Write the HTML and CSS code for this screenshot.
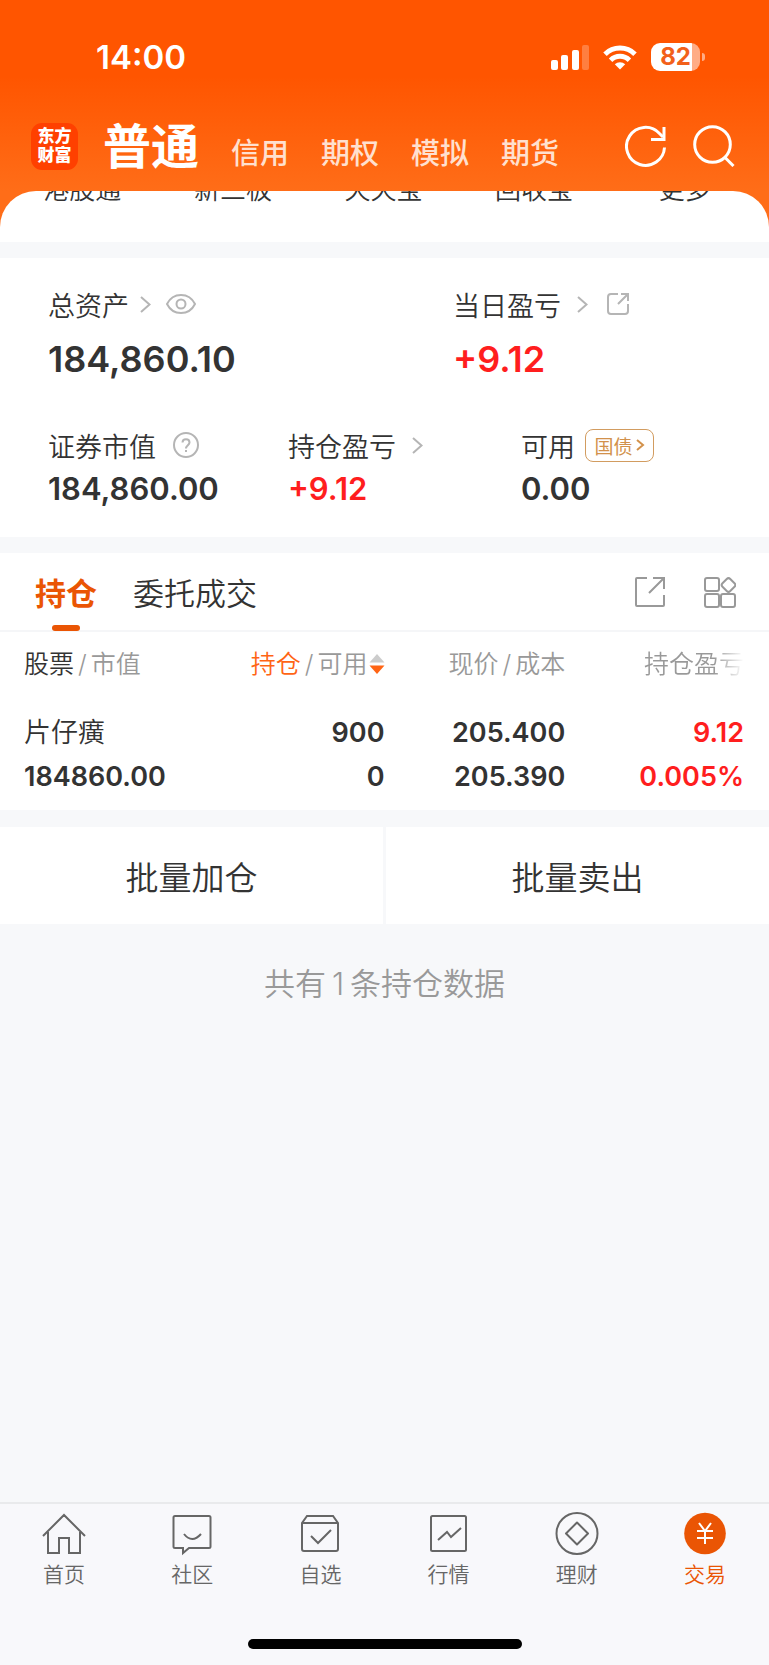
FILE: index.html
```html
<!DOCTYPE html>
<html lang="zh-CN">
<head>
  <meta charset="UTF-8">
  <meta name="viewport" content="width=device-width, initial-scale=1">
  <title>普通交易 - 持仓</title>
  <link rel="stylesheet" href="styles.css">
</head>
<body>

  <header class="top">
    <div class="status">
      <span class="time">14:00</span>
      <div class="signals">
        <svg width="38" height="25" viewBox="0 0 38 25" fill="#fff">
          <rect x="0" y="15" width="7" height="10" rx="2"/>
          <rect x="10" y="10" width="7" height="15" rx="2"/>
          <rect x="21" y="5" width="7" height="20" rx="2"/>
          <rect x="31" y="0" width="7" height="25" rx="2" opacity=".25"/>
        </svg>
        <svg width="34" height="25" viewBox="0 0 34 25" fill="none" stroke="#fff" stroke-width="5">
          <path d="M2 9.2a21.5 21.5 0 0 1 30 0"/>
          <path d="M7.6 15.2a13.4 13.4 0 0 1 18.800 0"/>
          <path d="M17 24.500l-5.200-5.200a7.400 7.400 0 0 1 10.400 0z" fill="#fff" stroke="none"/>
        </svg>
        <div class="battery">
          <span class="battery-level">82</span>
          <span class="battery-tip"></span>
        </div>
      </div>
    </div>
    <div class="bar">
      <div class="logo"><span>东方</span><span>财富</span></div>
      <nav class="accounts">
        <a href="#" class="current">普通</a>
        <a href="#">信用</a>
        <a href="#">期权</a>
        <a href="#">模拟</a>
        <a href="#">期货</a>
      </nav>
      <div class="bar-tools">
        <button type="button" aria-label="刷新">
          <svg width="42" height="42" viewBox="0 0 42 42" fill="none" stroke="#fff" stroke-width="3">
            <path d="M39.500 22.500A19 19 0 1 1 34.500 8.500L38 12"/>
            <path d="M39 2v12.500H26"/>
          </svg>
        </button>
        <button type="button" aria-label="搜索">
          <svg width="42" height="42" viewBox="0 0 42 42" fill="none" stroke="#fff" stroke-width="3">
            <circle cx="19.500" cy="19.500" r="17.800"/>
            <path d="M31.500 32l9 9"/>
          </svg>
        </button>
      </div>
    </div>
  </header>

  <div class="sheet-wrap">
    <div class="sheet">
      <a href="#">港股通</a>
      <a href="#">新三板</a>
      <a href="#">天天宝</a>
      <a href="#">回收宝</a>
      <a href="#">更多</a>
    </div>
  </div>

  <section class="summary">
    <div class="totals">
      <div class="item">
        <div class="label">总资产
          <svg class="arrow" width="11" height="17" viewBox="0 0 11 17"><path d="M1 1l8.500 7.500L1 16"/></svg>
          <svg class="eye" width="30" height="20" viewBox="0 0 30 20"><path d="M1 10C7-2 23-2 29 10C23 22 7 22 1 10z"/><circle cx="15" cy="10" r="4.500"/></svg>
        </div>
        <div class="value">184,860.10</div>
      </div>
      <div class="item">
        <div class="label">当日盈亏
          <svg class="arrow wide" width="11" height="17" viewBox="0 0 11 17"><path d="M1 1l8.500 7.500L1 16"/></svg>
          <svg class="share" width="24" height="24" viewBox="0 0 24 24"><path d="M12 2H5Q2 2 2 5v14q0 3 3 3h14q3 0 3-3v-7M12 12L22 2M15 2h7v7"/></svg>
        </div>
        <div class="value up">+9.12</div>
      </div>
    </div>
    <div class="details">
      <div class="item">
        <div class="label">证券市值
          <svg class="help" width="26" height="26" viewBox="0 0 26 26"><circle cx="13" cy="13" r="12"/><path d="M9.500 10.500c0-4.500 7-4.500 7 0c0 2.500-3.500 3-3.500 6M13 18v2"/></svg>
        </div>
        <div class="value">184,860.00</div>
      </div>
      <div class="item">
        <div class="label">持仓盈亏
          <svg class="arrow wide" width="11" height="17" viewBox="0 0 11 17"><path d="M1 1l8.500 7.500L1 16"/></svg>
        </div>
        <div class="value up">+9.12</div>
      </div>
      <div class="item">
        <div class="label">可用
          <button type="button" class="bond">国债<svg width="9" height="14" viewBox="0 0 9 14"><path d="M1 2l6 5-6 5"/></svg></button>
        </div>
        <div class="value">0.00</div>
      </div>
    </div>
  </section>

  <section class="positions">
    <div class="tabs">
      <button type="button" class="tab active">持仓</button>
      <button type="button" class="tab">委托成交</button>
      <div class="tab-tools">
        <button type="button" aria-label="分享">
          <svg width="32" height="32" viewBox="0 0 32 32"><path d="M13 2H3Q2 2 2 3v26q0 1 1 1h26q1 0 1-1V19M15 17L30 2M19 2h11v11"/></svg>
        </button>
        <button type="button" aria-label="更多功能">
          <svg width="32" height="32" viewBox="0 0 32 32"><rect x="1" y="2" width="14" height="13" rx="2"/><rect x="1" y="18" width="14" height="13" rx="2"/><rect x="17" y="18" width="14" height="13" rx="2"/><rect x="19" y="3.500" width="11" height="11" rx="2.500" transform="rotate(45 24.500 9)"/></svg>
        </button>
      </div>
    </div>
    <table>
      <thead>
        <tr>
          <th><span class="dark">股票</span><i>/</i>市值</th>
          <th><span class="sorted">持仓</span><i>/</i>可用<svg class="sort" width="16" height="22" viewBox="0 0 16 22"><path d="M8 1l7.500 8.500H.5z" fill="#ccc"/><path d="M8 21L.5 12.500h15z" fill="#ff6414"/></svg></th>
          <th>现价<i>/</i>成本</th>
          <th><span class="fade">持仓盈亏</span></th>
        </tr>
      </thead>
      <tbody>
        <tr>
          <td><span class="stock">片仔癀</span><span>184860.00</span></td>
          <td><span>900</span><span>0</span></td>
          <td><span>205.400</span><span>205.390</span></td>
          <td class="up"><span>9.12</span><span>0.005%</span></td>
        </tr>
      </tbody>
    </table>
  </section>

  <div class="batch">
    <button type="button">批量加仓</button>
    <button type="button">批量卖出</button>
  </div>

  <p class="count">共有<span>1</span>条持仓数据</p>

  <footer class="bottom">
    <nav class="menu">
      <a href="#">
        <svg width="46" height="46" viewBox="0 0 46 46"><path d="M2 25L23 4l21 21M7 21v21h11V27h10v15h11V21"/></svg>
        首页
      </a>
      <a href="#">
        <svg width="46" height="46" viewBox="0 0 46 46"><path d="M6 5h34q1.500 0 1.500 1.500v29q0 1.500-1.500 1.500H20l-6 5v-5H6q-1.500 0-1.500-1.500v-29Q4.500 5 6 5zM15 23q8 10 17 0"/></svg>
        社区
      </a>
      <a href="#">
        <svg width="46" height="46" viewBox="0 0 46 46"><path d="M5 12l5-7h26l5 7v26q0 2-2 2H7q-2 0-2-2zM5 12h36M14 25l7 7 13-13"/></svg>
        自选
      </a>
      <a href="#">
        <svg width="46" height="46" viewBox="0 0 46 46"><rect x="5" y="5" width="35" height="35" rx="1.500"/><path d="M12 29l9-8 4 5 10-9"/></svg>
        行情
      </a>
      <a href="#">
        <svg width="46" height="46" viewBox="0 0 46 46"><circle cx="23" cy="22.500" r="20.500"/><path d="M23 11.500l11 11-11 11-11-11z" stroke-linejoin="round"/></svg>
        理财
      </a>
      <a href="#" class="on">
        <svg width="46" height="46" viewBox="0 0 46 46"><circle cx="23" cy="22.500" r="20.800" fill="#ea5504" stroke="none"/><path d="M17 12l6 8 6-8M23 20v13M15 20h16M15 27h16" stroke="#fff"/></svg>
        交易
      </a>
    </nav>
    <div class="home-bar"></div>
  </footer>

</body>
</html>
```
FILE: styles.css
```css
* {
  box-sizing: border-box;
}

body {
  margin: 0;
  min-height: 100vh;
  display: flex;
  flex-direction: column;
  background: #f7f8fa;
  color: #333;
  font-family: Inter, "Noto Sans CJK SC", sans-serif;
  font-weight: 350;
}

a {
  color: inherit;
  text-decoration: none;
}

button {
  padding: 0;
  border: none;
  background: none;
  color: inherit;
  font: inherit;
  cursor: pointer;
}

svg {
  display: block;
  flex: none;
}

.up {
  color: #ff1e1e;
}

/* header */

.top {
  height: 191px;
  background: linear-gradient(#ff5500 40%, #ff6d18);
  color: #fff;
}

.status {
  display: flex;
  justify-content: space-between;
  align-items: center;
  height: 114px;
  padding: 0 64px 0 96px;
}

.time {
  font-size: 33px;
  font-weight: 600;
}

.signals {
  display: flex;
  align-items: center;
  gap: 14px;
}

.battery {
  display: flex;
  align-items: center;
  gap: 2px;
}

.battery-level {
  width: 49px;
  height: 28px;
  border-radius: 9px;
  background: linear-gradient(90deg, #fff 83%, #ffac85 83%);
  color: #f2601a;
  font-size: 24px;
  font-weight: 700;
  line-height: 28px;
  text-align: center;
}

.battery-tip {
  width: 3px;
  height: 8px;
  border-radius: 0 3px 3px 0;
  background: #ffac85;
}

.bar {
  display: flex;
  align-items: center;
  height: 64px;
  padding: 0 34px 0 31px;
}

.logo {
  display: flex;
  flex-direction: column;
  justify-content: center;
  width: 47px;
  height: 47px;
  border-radius: 11px;
  background: #ff4000;
  font-size: 17px;
  font-weight: 900;
  line-height: 19px;
  text-align: center;
}

.accounts {
  display: flex;
  align-items: baseline;
  gap: 32px;
  margin-left: 25px;
  padding-top: 8px;
  font-size: 29px;
  font-weight: 500;
  line-height: 64px;
  color: #ffe0cf;
}

.accounts .current {
  color: #fff;
  font-size: 48px;
  font-weight: 700;
}

.bar-tools {
  display: flex;
  gap: 26px;
  margin-left: auto;
}

/* shortcut row, scrolled under the header */

.sheet-wrap {
  background: #ff6d18;
}

.sheet {
  display: flex;
  height: 51px;
  padding: 0 9px 0 7px;
  overflow: hidden;
  border-radius: 36px 36px 0 0;
  background: #fff;
  font-size: 26px;
  line-height: 36px;
}

.sheet a {
  flex: 1;
  margin-top: -19px;
  text-align: center;
}

/* account summary */

.summary {
  margin-top: 16px;
  padding: 27px 48px 23px;
  background: #fff;
}

.totals,
.details {
  display: grid;
}

.totals {
  grid-template-columns: 405fr 268fr;
}

.details {
  grid-template-columns: 240fr 233fr 200fr;
  margin-top: 31px;
}

.label {
  display: flex;
  align-items: center;
  height: 38px;
  font-size: 27px;
  white-space: nowrap;
}

.label svg {
  fill: none;
  stroke: #b5b5b5;
  stroke-width: 2;
}

.label .arrow {
  margin-left: 11px;
}

.label .wide {
  margin-left: 16px;
}

.label .eye {
  margin-left: 15px;
}

.label .share {
  margin-left: 18px;
}

.label .help {
  margin-left: 17px;
}

.value {
  font-size: 31px;
  font-weight: 600;
  line-height: 50px;
}

.totals .value {
  font-size: 36px;
  line-height: 72px;
}

.bond {
  display: flex;
  align-items: center;
  justify-content: center;
  gap: 3px;
  width: 69px;
  height: 33px;
  margin-left: 10px;
  border: 1px solid #d29c60;
  border-radius: 8px;
  color: #d2914b;
  font-size: 19px;
  font-weight: 400;
}

.label .bond svg {
  stroke: #d2914b;
}

/* positions */

.positions {
  margin-top: 16px;
  background: #fff;
}

.tabs {
  display: flex;
  gap: 36px;
  height: 79px;
  padding: 0 33px 0 35px;
  border-bottom: 2px solid #f5f6f8;
  font-size: 31px;
}

.tab {
  position: relative;
}

.tab.active {
  color: #ea5504;
  font-weight: 700;
}

.tab.active::after {
  content: "";
  position: absolute;
  left: 50%;
  bottom: -1px;
  width: 28px;
  height: 6px;
  margin-left: -14px;
  border-radius: 3px;
  background: #ea5504;
}

.tab-tools {
  display: flex;
  align-items: center;
  gap: 38px;
  margin-left: auto;
}

.tab-tools svg {
  fill: none;
  stroke: #999;
  stroke-width: 2;
}

table {
  width: 100%;
  table-layout: fixed;
  border-collapse: collapse;
}

th,
td {
  padding: 0;
  text-align: right;
  white-space: nowrap;
}

th:first-child,
td:first-child {
  width: 26.5%;
  padding-left: 24px;
  text-align: left;
}

th:last-child,
td:last-child {
  width: 26.5%;
  padding-right: 25px;
}

th {
  height: 60px;
  color: #999;
  font-size: 25px;
  font-weight: 350;
}

th i {
  padding: 0 4px;
  font-style: normal;
}

.dark {
  color: #333;
}

.sorted {
  color: #ff6414;
}

.sort {
  display: inline-block;
  margin-left: 1px;
  vertical-align: -2px;
}

.fade {
  background: linear-gradient(90deg, #999 70%, #fff);
  -webkit-background-clip: text;
  background-clip: text;
  color: transparent;
}

td {
  padding-top: 19px;
  padding-bottom: 11px;
  font-size: 27px;
  font-weight: 600;
  line-height: 44px;
}

td span {
  display: block;
}

.stock {
  font-weight: 350;
}

/* batch buttons */

.batch {
  display: grid;
  grid-template-columns: 1fr 1fr;
  gap: 3px;
  margin-top: 17px;
}

.batch button {
  height: 97px;
  background: #fff;
  font-size: 33px;
}

.count {
  margin: 36px 0;
  color: #999;
  font-size: 31px;
  line-height: 48px;
  text-align: center;
}

.count span {
  padding: 0 6px;
}

/* bottom menu */

.bottom {
  margin-top: auto;
  padding-bottom: 16px;
  border-top: 2px solid #e9eaec;
  background: #f8f8fb;
}

.menu {
  display: flex;
  height: 135px;
  padding-top: 7px;
}

.menu a {
  flex: 1;
  display: flex;
  flex-direction: column;
  align-items: center;
  color: #666;
  font-size: 21px;
  line-height: 36px;
}

.menu svg {
  fill: none;
  stroke: #666;
  stroke-width: 2;
}

.menu .on {
  color: #ea5504;
}

.home-bar {
  width: 274px;
  height: 10px;
  margin: 0 auto;
  border-radius: 5px;
  background: #000;
}
```
